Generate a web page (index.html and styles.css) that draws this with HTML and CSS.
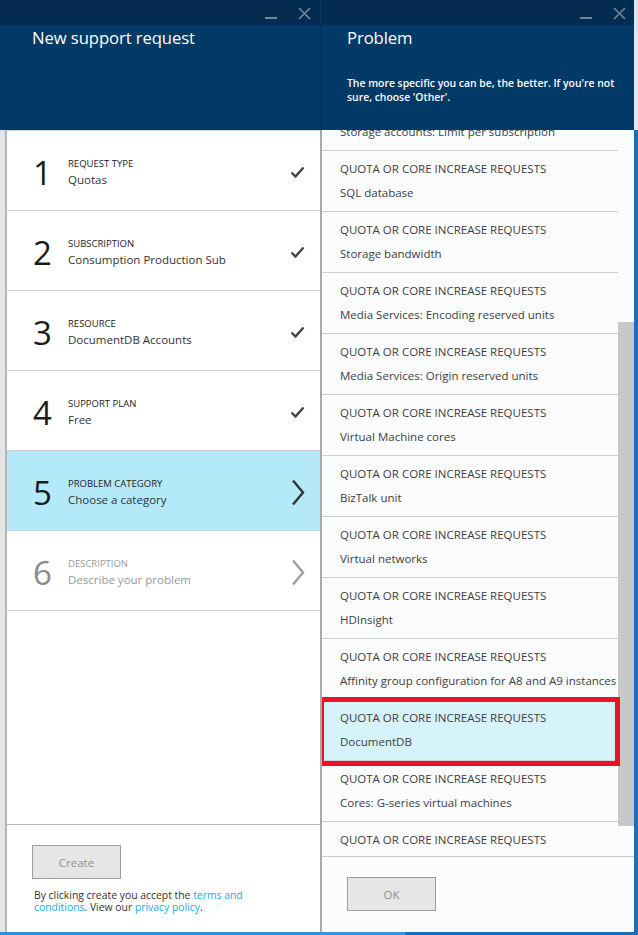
FILE: index.html
```html
<!DOCTYPE html>
<html>
<head>
<meta charset="utf-8">
<title>New support request</title>
<link rel="stylesheet" href="styles.css">
</head>
<body>
<div class="app">
  <section class="blade blade-left">
    <header class="bhead">
      <div class="topbar">
        <svg class="ico-min" width="12" height="12" viewBox="0 0 12 12"><path d="M0 11 H12" /></svg>
        <svg class="ico-close" width="13" height="13" viewBox="0 0 13 13"><path d="M1 1 L12 12 M12 1 L1 12" /></svg>
      </div>
      <h1 class="btitle">New support request</h1>
    </header>
    <div class="lbody">
      <ol class="steps">
        <li class="step">
          <span class="num">1</span>
          <div class="info"><div class="lbl">REQUEST TYPE</div><div class="val">Quotas</div></div>
          <svg class="check" width="15" height="12" viewBox="0 0 15 12"><path d="M1.5 6.5 L5.5 10.5 L13.5 1.5" /></svg>
        </li>
        <li class="step">
          <span class="num">2</span>
          <div class="info"><div class="lbl">SUBSCRIPTION</div><div class="val">Consumption Production Sub</div></div>
          <svg class="check" width="15" height="12" viewBox="0 0 15 12"><path d="M1.5 6.5 L5.5 10.5 L13.5 1.5" /></svg>
        </li>
        <li class="step">
          <span class="num">3</span>
          <div class="info"><div class="lbl">RESOURCE</div><div class="val">DocumentDB Accounts</div></div>
          <svg class="check" width="15" height="12" viewBox="0 0 15 12"><path d="M1.5 6.5 L5.5 10.5 L13.5 1.5" /></svg>
        </li>
        <li class="step">
          <span class="num">4</span>
          <div class="info"><div class="lbl">SUPPORT PLAN</div><div class="val">Free</div></div>
          <svg class="check" width="15" height="12" viewBox="0 0 15 12"><path d="M1.5 6.5 L5.5 10.5 L13.5 1.5" /></svg>
        </li>
        <li class="step step-active">
          <span class="num">5</span>
          <div class="info"><div class="lbl">PROBLEM CATEGORY</div><div class="val">Choose a category</div></div>
          <svg class="chev" width="14" height="27" viewBox="0 0 14 27"><path d="M2 1.5 L12 13.5 L2 25.5" /></svg>
        </li>
        <li class="step step-disabled">
          <span class="num">6</span>
          <div class="info"><div class="lbl">DESCRIPTION</div><div class="val">Describe your problem</div></div>
          <svg class="chev" width="14" height="27" viewBox="0 0 14 27"><path d="M2 1.5 L12 13.5 L2 25.5" /></svg>
        </li>
      </ol>
      <div class="lfooter">
        <button class="btn">Create</button>
        <p class="legal">By clicking create you accept the <a href="#">terms and<br>conditions</a>. View our <a href="#">privacy policy</a>.</p>
      </div>
    </div>
    <div class="bottombar"></div>
  </section>

  <section class="blade blade-right">
    <header class="bhead bhead-right">
      <div class="topbar">
        <svg class="ico-min" width="12" height="12" viewBox="0 0 12 12"><path d="M0 11 H12" /></svg>
        <svg class="ico-close" width="13" height="13" viewBox="0 0 13 13"><path d="M1 1 L12 12 M12 1 L1 12" /></svg>
      </div>
      <h1 class="btitle">Problem</h1>
      <p class="desc">The more specific you can be, the better. If you're not<br>sure, choose 'Other'.</p>
    </header>
    <div class="rbody">
      <div class="listwrap">
        <ul class="plist">
          <li class="pitem"><div class="ptitle">QUOTA OR CORE INCREASE REQUESTS</div><div class="psub">Storage accounts: Limit per subscription</div></li>
          <li class="pitem"><div class="ptitle">QUOTA OR CORE INCREASE REQUESTS</div><div class="psub">SQL database</div></li>
          <li class="pitem"><div class="ptitle">QUOTA OR CORE INCREASE REQUESTS</div><div class="psub">Storage bandwidth</div></li>
          <li class="pitem"><div class="ptitle">QUOTA OR CORE INCREASE REQUESTS</div><div class="psub">Media Services: Encoding reserved units</div></li>
          <li class="pitem"><div class="ptitle">QUOTA OR CORE INCREASE REQUESTS</div><div class="psub">Media Services: Origin reserved units</div></li>
          <li class="pitem"><div class="ptitle">QUOTA OR CORE INCREASE REQUESTS</div><div class="psub">Virtual Machine cores</div></li>
          <li class="pitem"><div class="ptitle">QUOTA OR CORE INCREASE REQUESTS</div><div class="psub">BizTalk unit</div></li>
          <li class="pitem"><div class="ptitle">QUOTA OR CORE INCREASE REQUESTS</div><div class="psub">Virtual networks</div></li>
          <li class="pitem"><div class="ptitle">QUOTA OR CORE INCREASE REQUESTS</div><div class="psub">HDInsight</div></li>
          <li class="pitem"><div class="ptitle">QUOTA OR CORE INCREASE REQUESTS</div><div class="psub">Affinity group configuration for A8 and A9 instances</div></li>
          <li class="pitem pitem-sel"><div class="ptitle">QUOTA OR CORE INCREASE REQUESTS</div><div class="psub">DocumentDB</div></li>
          <li class="pitem"><div class="ptitle">QUOTA OR CORE INCREASE REQUESTS</div><div class="psub">Cores: G-series virtual machines</div></li>
          <li class="pitem"><div class="ptitle">QUOTA OR CORE INCREASE REQUESTS</div></li>
        </ul>
        <div class="scrolltrack"><div class="thumb"></div></div>
        <div class="redbox"></div>
      </div>
      <div class="rfooter">
        <button class="btn">OK</button>
      </div>
    </div>
    <div class="bottombar bottombar-right"><span class="bb-light"></span></div>
  </section>
</div>
</body>
</html>
```

FILE: styles.css
```css
* { box-sizing: border-box; }
html, body { margin: 0; padding: 0; }
body {
  width: 638px;
  height: 935px;
  overflow: hidden;
  font-family: "Open Sans", "Noto Sans", sans-serif;
  background: #ffffff;
}
.app {
  display: flex;
  width: 638px;
  height: 935px;
}
.blade {
  display: flex;
  flex-direction: column;
  height: 935px;
}
.blade-left {
  width: 320px;
  background: #e4e5e7;
}
.blade-right {
  width: 318px;
}

/* header */
.bhead {
  height: 130px;
  flex: none;
  background: #013967;
  color: #ffffff;
  padding-left: 32px;
}
.bhead-right {
  padding-left: 25px;
  border-left: 2px solid #02315a;
  border-right: 4px solid #dfe6ee;
}
.topbar {
  height: 25px;
  margin-left: -32px;
  background: #042c51;
  display: flex;
  justify-content: flex-end;
  align-items: flex-start;
  gap: 21px;
  padding: 7px 9px 0 0;
}
.bhead-right .topbar {
  margin-left: -25px;
  padding-right: 8px;
}
.ico-min path, .ico-close path {
  stroke: #71869f;
  stroke-width: 2;
  fill: none;
}
.ico-close path { stroke-width: 1.6; }
.btitle {
  margin: 1px 0 0 0;
  font-size: 16.7px;
  line-height: 24px;
  font-weight: 400;
  color: #ffffff;
  letter-spacing: -0.1px;
}
.desc {
  margin: 26px 0 0 0;
  font-size: 10.4px;
  line-height: 14px;
  font-weight: 600;
  color: #ffffff;
  white-space: nowrap;
}

/* left body */
.lbody {
  flex: 1;
  margin-left: 5px;
  border-left: 2px solid #b4b5b7;
  border-top: 1px solid #cfd0d2;
  background: #ffffff;
  display: flex;
  flex-direction: column;
}
.steps {
  list-style: none;
  margin: 0;
  padding: 0;
}
.step {
  height: 80px;
  border-bottom: 1px solid #cfd0d2;
  display: flex;
  align-items: center;
  padding: 0 15px 0 26px;
  color: #222;
}
.num {
  width: 35px;
  font-size: 33px;
  line-height: 36px;
  font-weight: 400;
  color: #1b1b1b;
  margin-top: 4px;
}
.info {
  flex: 1;
  padding-top: 4px;
}
.lbl {
  font-size: 9.5px;
  line-height: 14px;
  color: #222;
}
.val {
  font-size: 11.5px;
  line-height: 17px;
  color: #333;
}
.check {
  margin-top: 2px;
}
.check path {
  stroke: #3f3f3f;
  stroke-width: 2.3;
  fill: none;
}
.chev {
  margin-top: 4px;
}
.chev path {
  stroke: #333;
  stroke-width: 2.4;
  fill: none;
}
.step-active {
  background: #b3e9f9;
}
.step-disabled .lbl,
.step-disabled .val {
  color: #9a9a9a;
}
.step-disabled .num { color: #8a8a8a; }
.step-disabled .chev path { stroke: #9c9c9c; }

.lfooter {
  margin-top: auto;
  height: 108px;
  border-top: 1px solid #b9babc;
  padding: 20px 0 0 25px;
}
.btn {
  display: block;
  width: 89px;
  height: 34px;
  background: #e6e6e6;
  border: 1px solid #9d9d9d;
  color: #8f8f8f;
  font-family: "Open Sans", "Noto Sans", sans-serif;
  font-size: 11.5px;
  padding: 0;
}
.legal {
  margin: 10px 0 0 2px;
  font-size: 10.4px;
  line-height: 12px;
  color: #333;
}
.legal a {
  color: #12aee6;
  text-decoration: none;
}

.bottombar {
  height: 3px;
  flex: none;
  background: #2f8edb;
}
.bottombar-right {
  background: #1b6dc0;
  display: flex;
}
.bb-light {
  width: 85px;
  background: #3a95de;
}

/* right body */
.rbody {
  flex: 1;
  border-left: 2px solid #a9aaac;
  border-right: 4px solid #1b6dc0;
  background: #fbfcfe;
  display: flex;
  flex-direction: column;
}
.listwrap {
  height: 727px;
  flex: none;
  border-bottom: 1px solid #c9cacc;
  overflow: hidden;
  position: relative;
  display: flex;
}
.plist {
  list-style: none;
  margin: -40px 0 0 0;
  padding: 0;
  width: 296px;
  flex: none;
}
.pitem {
  height: 61px;
  border-bottom: 1px solid #cfd0d2;
  padding: 10px 0 0 18px;
  color: #3d3d3d;
  white-space: nowrap;
}
.pitem-sel {
  background: #d6f2fb;
}
.ptitle {
  font-size: 11.5px;
  line-height: 16px;
}
.psub {
  margin-top: 8px;
  font-size: 11.5px;
  line-height: 16px;
}
.scrolltrack {
  flex: 1;
  position: relative;
}
.thumb {
  position: absolute;
  left: 0;
  right: 0;
  top: 192px;
  height: 504px;
  background: #c8c8c8;
}
.redbox {
  position: absolute;
  left: -3px;
  top: 567px;
  width: 301px;
  height: 69px;
  border: 5px solid #e8141f;
}
.rfooter {
  flex: 1;
  padding: 20px 0 0 25px;
}
```
